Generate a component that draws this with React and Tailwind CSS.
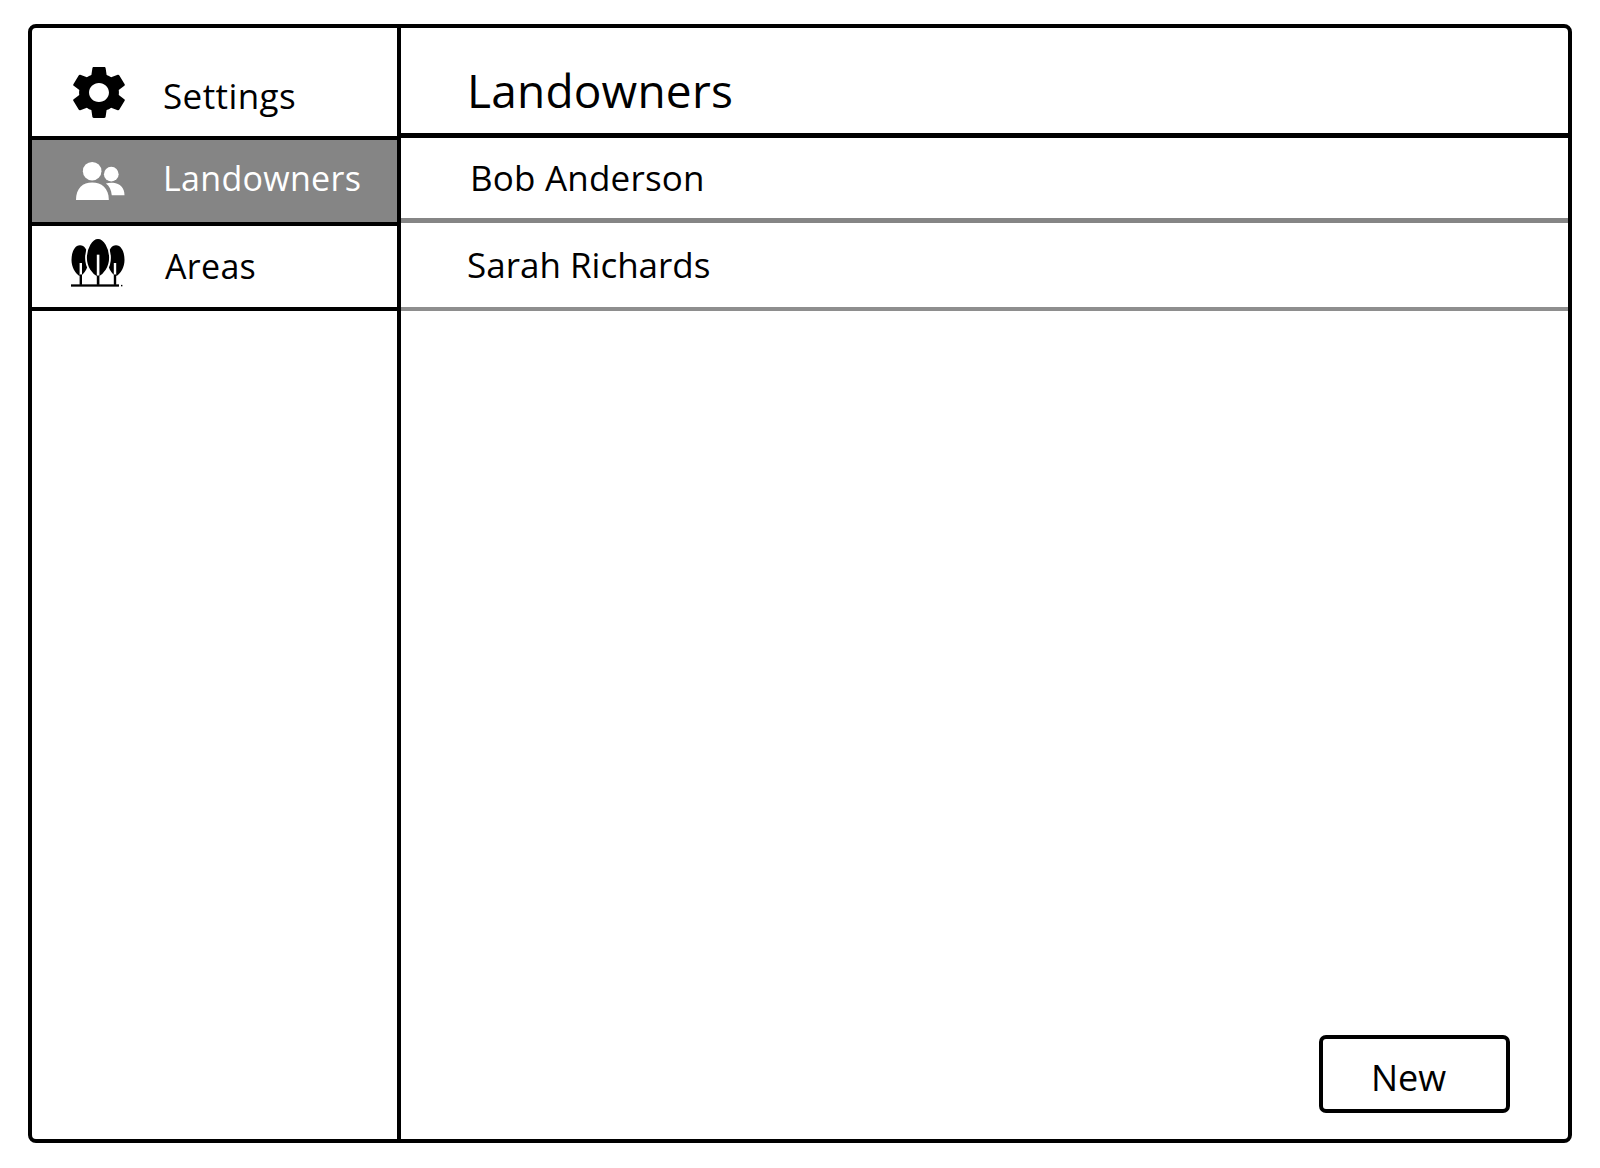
import React from "react";

function Gear() {
  return (
    <svg viewBox="2.6 2 18.8 20" className="w-[52px] h-[53px] mb-[2px]" preserveAspectRatio="none" fill="#000">
      <path d="M19.14 12.94c.04-.3.06-.61.06-.94 0-.32-.02-.64-.07-.94l2.03-1.58c.18-.14.23-.41.12-.61l-1.92-3.32c-.12-.22-.37-.29-.59-.22l-2.39.96c-.5-.38-1.03-.7-1.62-.94l-.36-2.54c-.04-.24-.24-.41-.48-.41h-3.84c-.24 0-.43.17-.47.41l-.36 2.54c-.59.24-1.13.57-1.62.94l-2.39-.96c-.22-.08-.47 0-.59.22L2.74 8.87c-.12.21-.08.47.12.61l2.03 1.58c-.05.3-.09.63-.09.94s.02.64.07.94l-2.03 1.58c-.18.14-.23.41-.12.61l1.92 3.32c.12.22.37.29.59.22l2.39-.96c.5.38 1.03.7 1.62.94l.36 2.54c.05.24.24.41.48.41h3.84c.24 0 .44-.17.47-.41l.36-2.54c.59-.24 1.13-.56 1.62-.94l2.39.96c.22.08.47 0 .59-.22l1.92-3.32c.12-.22.07-.47-.12-.61l-2.01-1.58zM12 15.6c-1.98 0-3.6-1.62-3.6-3.6s1.62-3.6 3.6-3.6 3.6 1.62 3.6 3.6-1.62 3.6-3.6 3.6z" />
    </svg>
  );
}

function People() {
  return (
    <svg viewBox="0 0 50 40" className="w-[49px] h-[40px]" fill="#fff">
      <circle cx="16.5" cy="10" r="9.5" />
      <path d="M0 39.5 C0 27 7 21.5 16.5 21.5 C26 21.5 33.5 27 33.5 39.5 Z" />
      <circle cx="36" cy="13" r="7.5" />
      <path d="M30.5 22.5 C33 21.8 35.5 21.5 38 21.8 C45 22.5 49.5 27 49.5 34.5 L36.5 34.5 C36 29 34 25 30.5 22.5 Z" />
    </svg>
  );
}

function Trees() {
  return (
    <svg viewBox="0 0 54 48" preserveAspectRatio="none" className="w-[54px] h-[50px] mb-[7px]">
      <path d="M9 7 C3.5 7 0.5 14 0.5 21 C0.5 28 4.5 34.5 9 36.5 C13.5 34.5 17.5 28 17.5 21 C17.5 14 14.5 7 9 7 Z" fill="#000" />
      <path d="M45 7 C39.5 7 36.5 14 36.5 21 C36.5 28 40.5 34.5 45 36.5 C49.5 34.5 53.5 28 53.5 21 C53.5 14 50.5 7 45 7 Z" fill="#000" />
      <path d="M27 0 C20.5 0 15 10 15 19 C15 28 20.5 35.5 27 38.5 C33.5 35.5 39 28 39 19 C39 10 33.5 0 27 0 Z" fill="#000" stroke="#fff" strokeWidth="1.8" />
      <rect x="8.6" y="24" width="2.4" height="12" fill="#fff" />
      <rect x="25.8" y="16" width="2.6" height="21" fill="#fff" />
      <rect x="42.8" y="24" width="2.4" height="12" fill="#fff" />
      <rect x="8.6" y="35" width="2.4" height="10" fill="#000" />
      <rect x="25.8" y="36" width="2.6" height="9" fill="#000" />
      <rect x="42.8" y="35" width="2.4" height="10" fill="#000" />
      <rect x="0" y="44.5" width="48" height="2.2" fill="#000" />
      <rect x="50" y="45" width="1.4" height="1.4" fill="#000" />
    </svg>
  );
}

export default function App() {
  return (
    <div className="w-[1600px] h-[1168px] bg-white pt-[24px] pl-[28px] text-black">
      <div className="w-[1544px] h-[1119px] border-4 border-black rounded-[8px] flex font-['Open_Sans',sans-serif] overflow-hidden">
        <aside className="w-[369px] shrink-0 border-r-4 border-black flex flex-col">
          <div className="h-[112px] border-b-4 border-black flex items-center pl-[41px] pt-[22px]">
            <Gear />
            <span className="ml-[38px] text-[35px] tracking-[0.4px] leading-none pt-[4px]">Settings</span>
          </div>
          <div className="h-[86px] border-b-4 border-black bg-[#858585] flex items-center pl-[44px] text-white">
            <People />
            <span className="ml-[38px] mb-[6px] text-[34px] tracking-[0.3px] leading-none">Landowners</span>
          </div>
          <div className="h-[85px] border-b-4 border-black flex items-center pl-[39px]">
            <Trees />
            <span className="ml-[40px] mb-[2px] text-[34px] tracking-[0.3px] leading-none">Areas</span>
          </div>
        </aside>
        <main className="flex-1 flex flex-col min-w-0">
          <div className="h-[110px] border-b-[5px] border-black flex items-center pl-[66px] pt-[18px]">
            <h1 className="text-[46px] tracking-[0.2px] font-normal leading-none">Landowners</h1>
          </div>
          <div className="h-[85px] border-b-[5px] border-[#858585] flex items-center pl-[69px]">
            <span className="text-[35px] tracking-[0.2px] leading-none mb-[2px]">Bob Anderson</span>
          </div>
          <div className="h-[88px] border-b-4 border-[#8e8e8e] flex items-center pl-[66px]">
            <span className="text-[35px] leading-none mb-[2px]">Sarah Richards</span>
          </div>
          <button className="mt-auto self-end mr-[58px] mb-[26px] w-[191px] h-[78px] border-4 border-black rounded-[7px] flex items-center justify-center text-[36px] leading-none pt-[8px] pr-[12px]">
            New
          </button>
        </main>
      </div>
    </div>
  );
}
